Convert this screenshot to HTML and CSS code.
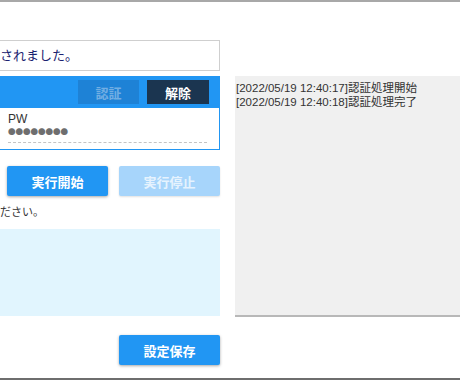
FILE: index.html
```html
<!doctype html>
<html lang="ja">
 <head>
  <meta charset="UTF-8">
  <meta name="viewport" content="width=device-width, initial-scale=1.0">
  <title>認証設定</title>
  <link rel="stylesheet" href="styles.css">
 </head>
 <body>
  <div class="window">
   <div class="main">
    <div class="left">
     <div class="message">されました。</div>
     <div class="auth-panel">
      <div class="auth-head">
       <button class="btn-auth" disabled>認証</button>
       <button class="btn-release">解除</button>
      </div>
      <div class="auth-body">
       <div class="pw-label">PW</div>
       <div class="pw-value">●●●●●●●●</div>
      </div>
     </div>
     <div class="run-row">
      <button class="btn">実行開始</button>
      <button class="btn btn-off" disabled>実行停止</button>
     </div>
     <p class="hint">ださい。</p>
     <div class="note-box"></div>
     <div class="save-row">
      <button class="btn">設定保存</button>
     </div>
    </div>
    <div class="right">
     <div class="log">
      <div class="log-line">[2022/05/19 12:40:17]認証処理開始</div>
      <div class="log-line">[2022/05/19 12:40:18]認証処理完了</div>
     </div>
    </div>
   </div>
  </div>
 </body>
</html>
```

FILE: styles.css
```css
* {
  margin: 0;
  padding: 0;
  box-sizing: border-box;
  font-family: 'Liberation Sans', 'Noto Sans CJK JP', sans-serif;
}

body {
  background: #fff;
  color: #333;
  overflow: hidden;
}

.window {
  height: 380px;
  border-top: 2px solid #a8a8a8;
  border-bottom: 2px solid #6e6e6e;
}

.main {
  display: flex;
  gap: 15px;
}

.left {
  width: 220px;
  flex-shrink: 0;
  padding-top: 38px;
}

.message {
  height: 31px;
  border: 1px solid #cfcfcf;
  border-left: none;
  font-size: 13px;
  line-height: 29px;
  color: #1a2370;
  white-space: nowrap;
}

.auth-panel {
  margin-top: 5px;
}

.auth-head {
  height: 32px;
  background: #2196f3;
  display: flex;
  justify-content: flex-end;
  align-items: center;
  gap: 8px;
  padding-right: 11px;
}

.auth-head button {
  height: 24px;
  border: none;
  font-size: 13px;
  font-weight: bold;
}

.btn-auth {
  width: 61px;
  background: #1e82d6;
  color: #72aee3;
}

.btn-release {
  width: 62px;
  background: #1b3550;
  color: #fff;
}

.auth-body {
  height: 42px;
  border-right: 1px solid #2196f3;
  border-bottom: 1px solid #2196f3;
  padding: 4px 12px 0 8px;
}

.pw-label {
  font-size: 12px;
  line-height: 14px;
  color: #333;
}

.pw-value {
  font-family: 'Noto Sans CJK JP', sans-serif;
  font-size: 7.5px;
  line-height: 12px;
  color: #6e6e6e;
  padding-bottom: 4px;
  border-bottom: 1px dashed #c4c4c4;
}

.run-row {
  margin-top: 16px;
  display: flex;
  justify-content: flex-end;
  gap: 11px;
}

.btn {
  width: 101px;
  height: 30px;
  border: none;
  border-radius: 2px;
  background: #2196f3;
  color: #fff;
  font-size: 13px;
  font-weight: bold;
  box-shadow: 0 1px 3px rgba(0, 0, 0, 0.35);
  cursor: pointer;
}

.btn-off {
  background: #a7d5fb;
  color: #e6f3fe;
  box-shadow: 0 1px 2px rgba(0, 0, 0, 0.12);
  cursor: default;
}

.hint {
  margin-top: 8px;
  font-size: 11px;
  line-height: 16px;
  color: #333;
  white-space: nowrap;
}

.note-box {
  margin-top: 9px;
  height: 87px;
  background: #e1f5fe;
}

.save-row {
  margin-top: 19px;
  display: flex;
  justify-content: flex-end;
}

.right {
  flex: 1;
  padding-top: 74px;
}

.log {
  height: 241px;
  background: #f0f0f0;
  border-bottom: 2px solid #b8b8b8;
  padding: 5px 0 0 1px;
}

.log-line {
  font-size: 11.5px;
  line-height: 14px;
  color: #333;
  white-space: nowrap;
}
```
